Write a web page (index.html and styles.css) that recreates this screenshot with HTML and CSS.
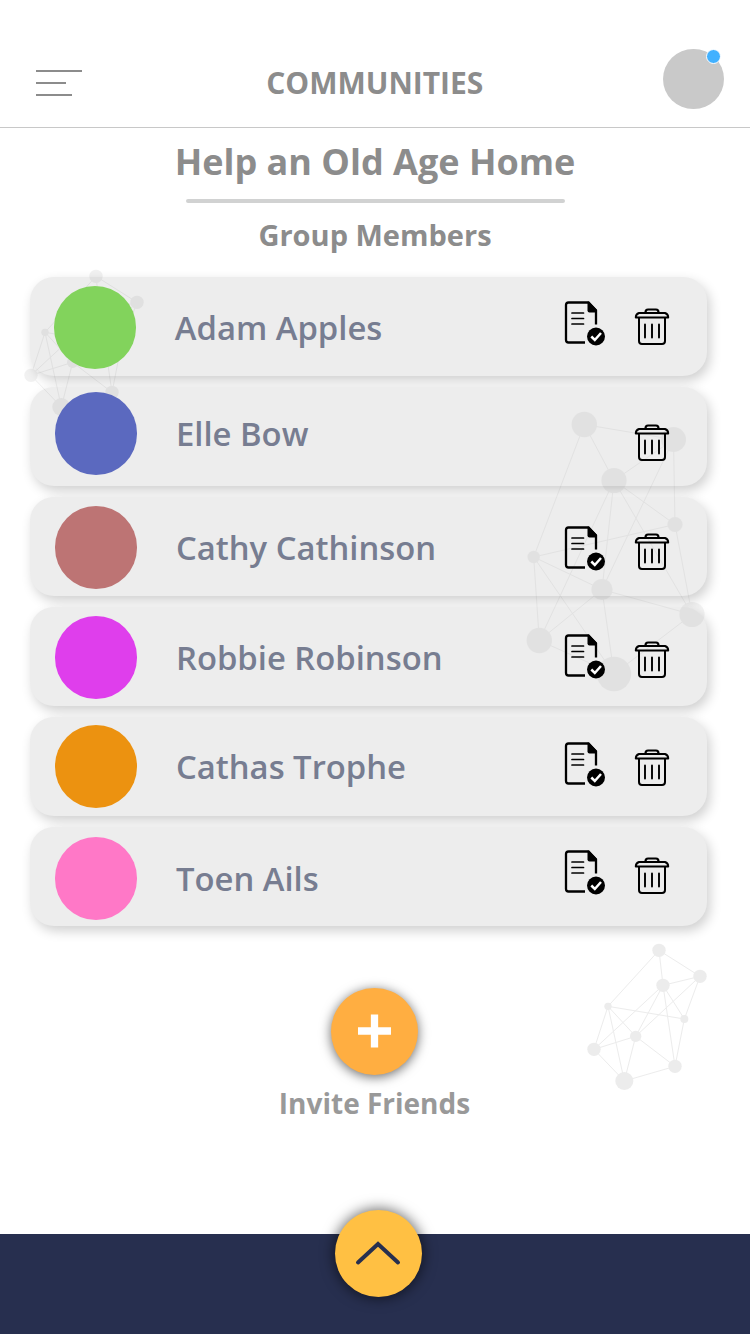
FILE: index.html
```html
<!DOCTYPE html>
<html lang="en">
<head>
<meta charset="utf-8">
<title>Communities</title>
<link rel="stylesheet" href="styles.css">
</head>
<body>
<svg class="defs" width="0" height="0" aria-hidden="true">
  <symbol id="doc" viewBox="0 0 42 46">
    <path d="M22 41.500H5.500Q3 41.500 3 39V4Q3 1.500 5.500 1.500H25.500L33 9.500V23.500" fill="none" stroke="#000" stroke-width="2.300"/>
    <path d="M24.500 .8V9.500Q24.500 11.500 26.500 11.500H34V8.700L26 .8Z"/>
    <path d="M9 12H20.500M9 17.500H20.500M9 23H20.500" fill="none" stroke="#000" stroke-width="1.700" stroke-linecap="round"/>
    <circle cx="33" cy="35.500" r="9"/>
    <path d="M28.300 35.500L31.800 39L38 32" fill="none" stroke="#fff" stroke-width="2.500"/>
  </symbol>
  <symbol id="trash" viewBox="0 0 36 38" fill="none" stroke="#000">
    <path d="M11.500 4.500Q11.500 1.500 14 1.500H22Q24.500 1.500 24.500 4.500" stroke-width="2.200"/>
    <path d="M5 5H31Q34.200 6.200 34.200 9.400H1.800Q1.800 6.200 5 5Z" stroke-width="2" stroke-linejoin="round"/>
    <path d="M5 9.500V33Q5 36 8 36H28Q31 36 31 33V9.500" stroke-width="2"/>
    <path d="M11 16.500V29.500M18 16.500V29.500M25 16.500V29.500" stroke-width="1.900" stroke-linecap="round"/>
  </symbol>
  <symbol id="net" viewBox="0 0 480 510">
    <path d="M267 61L390 139M267 61L279 166M267 61L114 229M390 139L279 166M390 139L343 267M390 139L197 319M279 166L343 267M279 166L197 319M279 166L72 358M279 166L315 409M114 229L343 267M114 229L197 319M114 229L72 358M114 229L163 453M197 319L72 358M197 319L315 409M197 319L163 453M72 358L163 453M163 453L315 409M343 267L315 409" fill="none" stroke="#000" stroke-width="3"/>
    <circle cx="267" cy="61" r="20"/><circle cx="390" cy="139" r="20"/><circle cx="279" cy="166" r="20"/><circle cx="343" cy="267" r="12"/><circle cx="114" cy="229" r="11"/><circle cx="197" cy="319" r="17"/><circle cx="72" cy="358" r="20"/><circle cx="315" cy="409" r="20"/><circle cx="163" cy="453" r="27"/>
  </symbol>
</svg>

<div class="screen">
  <header class="topbar">
    <svg class="menu" width="47" height="27" viewBox="0 0 47 27"><path d="M0 1H46M0 13H30M0 25H36" stroke="#8c8c8c" stroke-width="2"/></svg>
    <h1 class="title">COMMUNITIES</h1>
    <div class="profile"><span class="status"></span></div>
  </header>

  <main class="content">
    <h2 class="group-name">Help an Old Age Home</h2>
    <div class="rule"></div>
    <h3 class="subtitle">Group Members</h3>

    <ul class="members">
      <li class="card row-adam">
        <div class="person"><span class="avatar green"></span><span class="name">Adam Apples</span></div>
        <div class="actions"><svg class="doc"><use href="#doc"/></svg><svg class="trash"><use href="#trash"/></svg></div>
      </li>
      <li class="card row-elle">
        <div class="person"><span class="avatar blue"></span><span class="name">Elle Bow</span></div>
        <div class="actions"><svg class="trash"><use href="#trash"/></svg></div>
      </li>
      <li class="card row-cathy">
        <div class="person"><span class="avatar rust"></span><span class="name">Cathy Cathinson</span></div>
        <div class="actions"><svg class="doc"><use href="#doc"/></svg><svg class="trash"><use href="#trash"/></svg></div>
      </li>
      <li class="card row-robbie">
        <div class="person"><span class="avatar magenta"></span><span class="name">Robbie Robinson</span></div>
        <div class="actions"><svg class="doc"><use href="#doc"/></svg><svg class="trash"><use href="#trash"/></svg></div>
      </li>
      <li class="card row-cathas">
        <div class="person"><span class="avatar orange"></span><span class="name">Cathas Trophe</span></div>
        <div class="actions"><svg class="doc"><use href="#doc"/></svg><svg class="trash"><use href="#trash"/></svg></div>
      </li>
      <li class="card row-toen">
        <div class="person"><span class="avatar pink"></span><span class="name">Toen Ails</span></div>
        <div class="actions"><svg class="doc"><use href="#doc"/></svg><svg class="trash"><use href="#trash"/></svg></div>
      </li>
    </ul>

    <div class="invite">
      <div class="round add"><svg width="34" height="34" viewBox="0 0 34 34"><path d="M17.500 .5V33.500M1 17H34" stroke="#fff" stroke-width="7.300"/></svg></div>
      <span class="invite-label">Invite Friends</span>
    </div>
  </main>

  <footer class="bottombar">
    <div class="round up"><svg width="46" height="26" viewBox="0 0 46 26"><path d="M3 22.500L23 4L43 22.500" fill="none" stroke="#272f4f" stroke-width="4" stroke-linecap="round"/></svg></div>
  </footer>

  <svg class="net net-left"><use href="#net"/></svg>
  <svg class="net net-right"><use href="#net"/></svg>
  <svg class="net net-large" viewBox="510 400 220 300">
    <path d="M584.300 424.500L673.500 439.500M584.300 424.500L614 480.500M584.300 424.500L533.700 557M673.500 439.500L614 480.500M673.500 439.500L675 524.500M673.500 439.500L602 589.500M614 480.500L675 524.500M614 480.500L602 589.500M614 480.500L539.300 640.500M614 480.500L692 614.500M533.700 557L675 524.500M533.700 557L602 589.500M533.700 557L539.300 640.500M533.700 557L614 674M602 589.500L539.300 640.500M602 589.500L692 614.500M602 589.500L614 674M539.300 640.500L614 674M614 674L692 614.500M675 524.500L692 614.500" fill="none" stroke="#000" stroke-width="1"/>
    <circle cx="584.300" cy="424.500" r="12.700"/><circle cx="673.500" cy="439.500" r="12.500"/><circle cx="614" cy="480.500" r="12.600"/><circle cx="675" cy="524.500" r="7.600"/><circle cx="533.700" cy="557" r="6.200"/><circle cx="602" cy="589.500" r="10.600"/><circle cx="539.300" cy="640.500" r="12.700"/><circle cx="692" cy="614.500" r="12.600"/><circle cx="614" cy="674" r="17.200"/>
  </svg>
</div>
</body>
</html>
```
FILE: styles.css
```css
* { box-sizing: border-box; }

body {
  margin: 0;
  background: #fff;
  font-family: "Open Sans", "Noto Sans", sans-serif;
}

.defs { position: absolute; }

.screen {
  position: relative;
  display: flex;
  flex-direction: column;
  width: 750px;
  height: 1334px;
  overflow: hidden;
}

.topbar {
  display: grid;
  grid-template-columns: 1fr auto 1fr;
  align-items: start;
  width: 749.5px;
  height: 128px;
  padding: 49px 26px 0 36px;
  border-bottom: 1px solid #c8c8c8;
}

.menu { margin-top: 21px; }

.title {
  margin: 13px 0 0 -10px;
  color: #8c8c8c;
  font-size: 30px;
  line-height: 41px;
  font-weight: 700;
}

.profile {
  position: relative;
  justify-self: end;
  width: 60.5px;
  height: 60px;
  border-radius: 50%;
  background: #c9c9c9;
}

.status {
  position: absolute;
  top: 0;
  right: 2.5px;
  width: 15px;
  height: 15px;
  border: 1px solid #fff;
  border-radius: 50%;
  background: #42b1ff;
}

.content {
  display: flex;
  flex: 1;
  flex-direction: column;
  align-items: center;
  width: 750px;
}

.group-name, .subtitle {
  margin: 0;
  color: #8c8c8c;
  font-weight: 700;
}

.group-name {
  margin-top: 9px;
  font-size: 36px;
  line-height: 50px;
}

.rule {
  width: 379px;
  height: 4px;
  margin-top: 12px;
  border-radius: 2px;
  background: #d1d2d2;
}

.subtitle {
  margin-top: 12px;
  font-size: 29px;
  line-height: 40px;
}

.members {
  display: flex;
  flex-direction: column;
  gap: 11px;
  align-self: flex-start;
  width: 677px;
  margin: 22px 0 0 30.4px;
  padding: 0;
  list-style: none;
}

.card {
  display: flex;
  justify-content: space-between;
  align-items: flex-start;
  height: 99px;
  padding: 0 37.9px 0 24.600px;
  border-radius: 24px;
  background: #ededed;
  box-shadow: 3px 5px 12px rgba(0, 0, 0, 0.19);
}

.person, .actions {
  position: relative;
  z-index: 2;
  display: flex;
}

.person { align-items: center; gap: 38.500px; }

.avatar { width: 82.5px; height: 82.5px; border-radius: 50%; }

.name {
  padding-top: 1px;
  color: #777d91;
  font-size: 32.8px;
  font-weight: 600;
  line-height: 46px;
}

.actions { align-items: flex-start; gap: 28.5px; }
.doc { width: 42px; height: 46px; }
.trash { width: 36px; height: 38px; margin-top: 7px; }

.green { background: #82d35c; }
.blue { background: #5b69bf; }
.rust { background: #bd7474; }
.magenta { background: #df3eec; }
.orange { background: #ec9210; }
.pink { background: #ff78c7; }

.row-adam { padding-left: 23.4px; }
.row-adam .person { margin-top: 9px; }
.row-adam .actions { margin-top: 23.5px; }
.row-elle .person { margin-top: 5px; }
.row-elle .actions { margin-top: 30px; }
.row-cathy .person { margin-top: 9px; }
.row-cathy .actions { margin-top: 29px; }
.row-robbie .person { margin-top: 9px; }
.row-robbie .actions { margin-top: 27px; }
.row-cathas .person { margin-top: 8px; }
.row-cathas .actions { margin-top: 25px; }
.row-toen .person { margin-top: 10px; }
.row-toen .actions { margin-top: 23px; }

.invite {
  display: flex;
  flex-direction: column;
  align-items: center;
  margin: 61.5px 1px 0 0;
}

.round {
  display: flex;
  justify-content: center;
  align-items: center;
  width: 87.5px;
  height: 87.5px;
  border-radius: 50%;
}

.add {
  background: #ffae41;
  box-shadow: 0 2px 12px rgba(0, 0, 0, 0.6);
}

.invite-label {
  margin-top: 9px;
  color: #999;
  font-size: 28px;
  font-weight: 700;
  line-height: 38px;
}

.bottombar {
  display: flex;
  justify-content: center;
  width: 749.5px;
  height: 100px;
  padding-left: 7px;
  background: #272f4f;
}

.up {
  margin-top: -24.3px;
  background: #ffc043;
  box-shadow: 0 0 14px 1px rgba(0, 0, 0, 0.6);
}

.net {
  position: absolute;
  z-index: 1;
  pointer-events: none;
}

.net-left { left: 6.6px; top: 256px; width: 160px; height: 170px; opacity: 0.05; }
.net-right { left: 570px; top: 930px; width: 160px; height: 170px; opacity: 0.07; }
.net-large { left: 510px; top: 400px; width: 220px; height: 300px; opacity: 0.045; }
```
